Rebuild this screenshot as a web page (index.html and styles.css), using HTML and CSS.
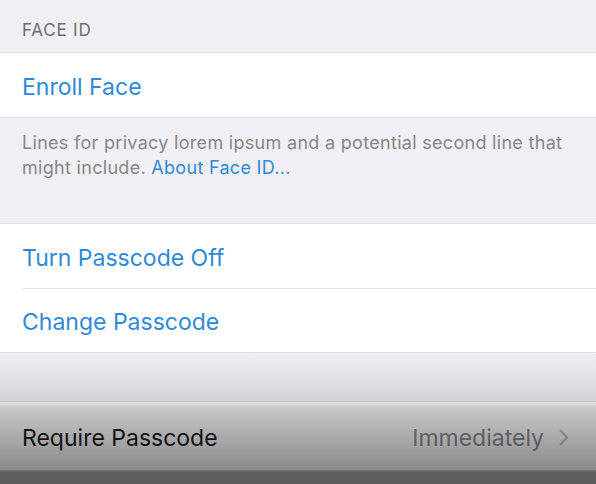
FILE: index.html
```html
<!DOCTYPE html>
<html lang="en">
<head>
    <meta charset="UTF-8">
    <meta name="viewport" content="width=device-width, initial-scale=1.0">
    <title>Face ID &amp; Passcode</title>
    <link rel="stylesheet" href="styles.css">
</head>
<body>
    <div class="screen">
        <div class="section-header">FACE ID</div>
        <div class="group">
            <div class="cell link">Enroll Face</div>
        </div>
        <div class="section-footer">
            Lines for privacy lorem ipsum and a potential second line that
            might include. <span class="footer-link">About Face ID...</span>
        </div>

        <div class="group">
            <div class="cell link">Turn Passcode Off</div>
            <div class="cell link">Change Passcode</div>
        </div>

        <div class="spacer"></div>

        <div class="group">
            <div class="cell tall">
                <span class="cell-title">Require Passcode</span>
                <span class="cell-detail">Immediately
                    <svg class="chevron" width="10" height="17" viewBox="0 0 10 17">
                        <path d="M1.5 1.5 L8 8.5 L1.5 15.5" fill="none" stroke="#c4c4c9" stroke-width="2" stroke-linecap="round" stroke-linejoin="round"/>
                    </svg>
                </span>
            </div>
        </div>

        <div class="dim"></div>
    </div>
</body>
</html>
```

FILE: styles.css
```css
body {
    margin: 0;
    background-color: #efeff4;
    font-family: 'Inter', 'Helvetica Neue', sans-serif;
}
.screen {
    position: relative;
    height: 484px;
    overflow: hidden;
}
.section-header {
    height: 52px;
    box-sizing: border-box;
    padding: 20px 22px 0;
    font-size: 17px;
    letter-spacing: 0.8px;
    color: #6d6d72;
}
.group {
    background-color: #fff;
    border-top: 1px solid #e0e0e5;
    border-bottom: 1px solid #e0e0e5;
}
.cell {
    height: 64px;
    box-sizing: border-box;
    padding: 3px 22px 0;
    display: flex;
    align-items: center;
    justify-content: space-between;
    font-size: 23px;
    color: #1a1a1a;
}
.cell + .cell { border-top: 1px solid #e3e3e7; margin-left: 22px; padding-left: 0; }
.cell.tall { height: 68px; padding-right: 27px; }
.link { color: #2f89d9; }
.section-footer {
    height: 105px;
    box-sizing: border-box;
    padding: 12px 22px 0;
    font-size: 18px;
    letter-spacing: 0.3px;
    line-height: 25px;
    color: #86868b;
}
.footer-link { color: #2f89d9; }
.spacer { height: 48px; }
.cell-detail {
    display: flex;
    align-items: center;
    gap: 15px;
    color: #8e8e93;
}
.dim {
    position: absolute;
    left: 0;
    right: 0;
    top: 354px;
    bottom: 0;
    background: linear-gradient(to bottom,
        rgba(0,0,0,0) 0px,
        rgba(0,0,0,0.12) 48px,
        rgba(0,0,0,0.14) 50px,
        rgba(0,0,0,0.22) 54px,
        rgba(0,0,0,0.46) 116px,
        rgba(0,0,0,0.6) 118px,
        rgba(0,0,0,0.62) 130px);
}
```
